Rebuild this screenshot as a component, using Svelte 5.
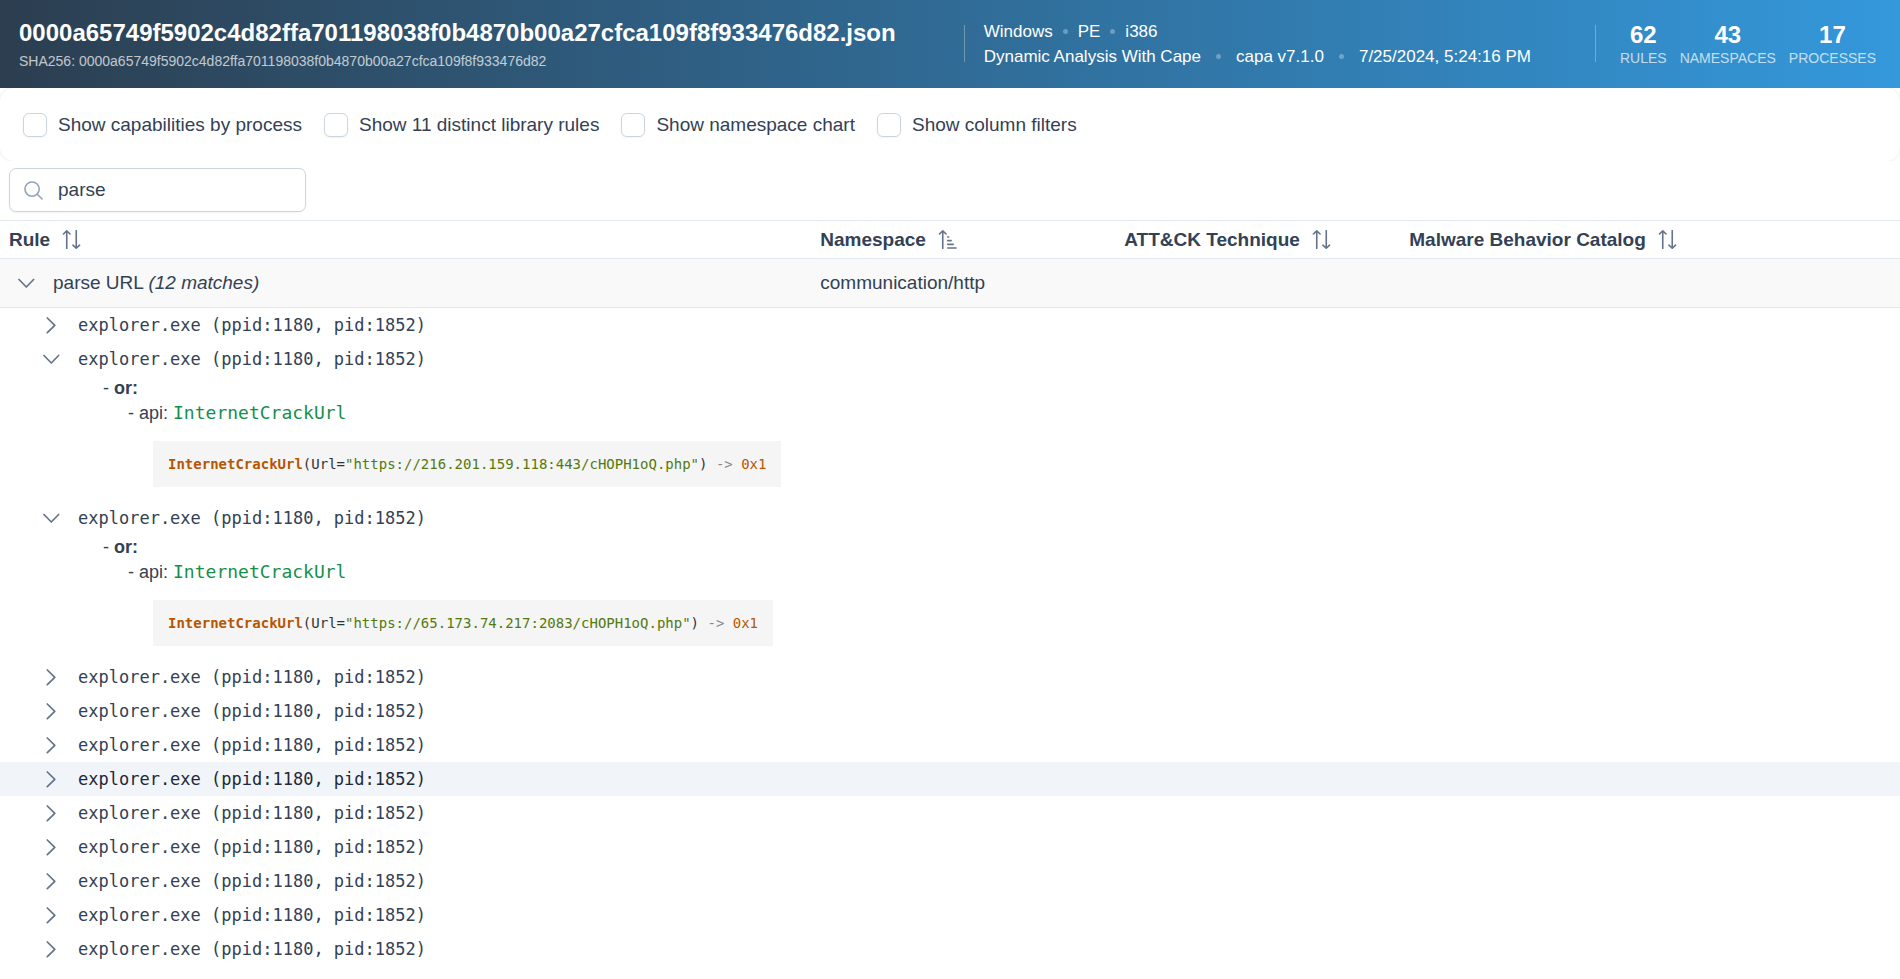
<script lang="ts">
	type Call = { api: string; url: string; ret: string };
	type Match = { process: string; open: boolean; active?: boolean; call: Call };

	const sha256 = '0000a65749f5902c4d82ffa701198038f0b4870b00a27cfca109f8f933476d82';

	const platform = ['Windows', 'PE', 'i386'];
	const analysis = ['Dynamic Analysis With Cape', 'capa v7.1.0', '7/25/2024, 5:24:16 PM'];

	const stats = [
		{ value: 62, label: 'RULES' },
		{ value: 43, label: 'NAMESPACES' },
		{ value: 17, label: 'PROCESSES' }
	];

	let options = $state([
		{ id: 'by-process', label: 'Show capabilities by process', checked: false },
		{ id: 'library-rules', label: 'Show 11 distinct library rules', checked: false },
		{ id: 'namespace-chart', label: 'Show namespace chart', checked: false },
		{ id: 'column-filters', label: 'Show column filters', checked: false }
	]);

	const columns = [
		{ name: 'Rule', sorted: false },
		{ name: 'Namespace', sorted: true },
		{ name: 'ATT&CK Technique', sorted: false },
		{ name: 'Malware Behavior Catalog', sorted: false }
	];

	function makeMatch(url: string, open = false, active = false): Match {
		return {
			process: 'explorer.exe (ppid:1180, pid:1852)',
			open,
			active,
			call: { api: 'InternetCrackUrl', url, ret: '0x1' }
		};
	}

	const urlA = 'https://216.201.159.118:443/cHOPH1oQ.php';
	const urlB = 'https://65.173.74.217:2083/cHOPH1oQ.php';

	let search = $state('parse');
	let ruleOpen = $state(true);
	let matches = $state<Match[]>([
		makeMatch(urlA),
		makeMatch(urlA, true),
		makeMatch(urlB, true),
		makeMatch(urlA),
		makeMatch(urlB),
		makeMatch(urlA),
		makeMatch(urlB, false, true),
		makeMatch(urlA),
		makeMatch(urlB),
		makeMatch(urlA),
		makeMatch(urlB),
		makeMatch(urlA)
	]);
</script>

{#snippet chevron(open: boolean)}
	<svg class="chevron" viewBox="0 0 17 17" aria-hidden="true">
		<path d={open ? 'M1 4.5l7.3 7.5L15.6 4.5' : 'M4.3 1l7.5 7.3L4.3 15.6'} />
	</svg>
{/snippet}

<header class="banner">
	<div class="file">
		<h1>{sha256}.json</h1>
		<p>SHA256: {sha256}</p>
	</div>
	<div class="group">
		<span class="rule-line"></span>
		<div class="meta">
			<div class="meta-row">
				{#each platform as item, i}
					{#if i > 0}<span class="dot"></span>{/if}
					<span>{item}</span>
				{/each}
			</div>
			<div class="meta-row wide">
				{#each analysis as item, i}
					{#if i > 0}<span class="dot"></span>{/if}
					<span>{item}</span>
				{/each}
			</div>
		</div>
	</div>
	<div class="group">
		<span class="rule-line"></span>
		<div class="stats">
			{#each stats as stat}
				<div class="stat">
					<strong>{stat.value}</strong>
					<span>{stat.label}</span>
				</div>
			{/each}
		</div>
	</div>
</header>

<main>
	<div class="options-wrap">
		<div class="options">
			{#each options as option (option.id)}
				<label for={option.id}>
					<input id={option.id} type="checkbox" bind:checked={option.checked} />
					<span>{option.label}</span>
				</label>
			{/each}
		</div>
	</div>

	<div class="toolbar">
		<div class="search">
			<svg viewBox="0 0 20 20" aria-hidden="true">
				<circle cx="8.5" cy="8.5" r="7.5" />
				<path d="M14 14l5 5" />
			</svg>
			<input type="text" aria-label="Search" bind:value={search} />
		</div>
	</div>

	<table>
		<colgroup>
			<col class="col-rule" />
			<col class="col-namespace" />
			<col class="col-attack" />
			<col />
		</colgroup>
		<thead>
			<tr>
				{#each columns as column}
					<th aria-sort={column.sorted ? 'ascending' : 'none'}>
						<button class="sort">
							<span>{column.name}</span>
							<svg viewBox="0 0 20 20" aria-hidden="true">
								<path d="M5 19.5V1M1.5 4.2L5 1l3.5 3.2" />
								{#if column.sorted}
									<path d="M10.2 7.3h1M10.2 11.2h3.6M10.2 15.1h5.8M10.2 19h8.8" />
								{:else}
									<path d="M15 .7v18.5M11.5 16l3.5 3.2 3.5-3.2" />
								{/if}
							</svg>
						</button>
					</th>
				{/each}
			</tr>
		</thead>
		<tbody>
			<tr class="rule">
				<td>
					<div class="node">
						<button class="toggle" aria-label="Toggle rule" onclick={() => (ruleOpen = !ruleOpen)}>
							{@render chevron(ruleOpen)}
						</button>
						<span>parse URL <em>(12 matches)</em></span>
					</div>
				</td>
				<td>communication/http</td>
				<td></td>
				<td></td>
			</tr>
			{#if ruleOpen}
				{#each matches as match}
					<tr class="match" class:active={match.active}>
						<td colspan="4">
							<div class="node">
								<button class="toggle" aria-label="Toggle match" onclick={() => (match.open = !match.open)}>
									{@render chevron(match.open)}
								</button>
								<span class="process">{match.process}</span>
							</div>
						</td>
					</tr>
					{#if match.open}
						<tr class="detail">
							<td colspan="4">
								<div class="statement">- <b>or:</b></div>
								<div class="statement feature">- api: <code>{match.call.api}</code></div>
								<pre><b>{match.call.api}</b>(Url=<i>"{match.call.url}"</i>) <s>-&gt;</s> <u>{match.call.ret}</u></pre>
							</td>
						</tr>
					{/if}
				{/each}
			{/if}
		</tbody>
	</table>
</main>

<style>
	:global(body) {
		background: #fff;
		color: #334155;
		font-family: 'Liberation Sans', Arial, sans-serif;
		font-size: 19px;
	}

	button {
		border: none;
		background: none;
		padding: 0;
		font: inherit;
		color: inherit;
		cursor: pointer;
	}

	svg {
		fill: none;
		stroke: #64748b;
		stroke-width: 1.7;
		stroke-linecap: round;
		stroke-linejoin: round;
	}

	.banner {
		display: flex;
		justify-content: space-between;
		box-sizing: border-box;
		min-height: 88px;
		padding: 19px 24px 12px 19px;
		background: linear-gradient(90deg, #2c3e50, #3498db);
		color: #fff;
		white-space: nowrap;
	}

	.file {
		padding-right: 4px;
	}

	h1 {
		margin: 0;
		font-size: 24px;
		line-height: 28px;
	}

	.file p {
		margin: 5px 0 0;
		font-size: 14px;
		line-height: 18px;
		opacity: 0.7;
	}

	.group {
		display: flex;
	}

	.rule-line {
		width: 1px;
		height: 37px;
		margin-top: 6px;
		background: rgba(255, 255, 255, 0.3);
	}

	.meta {
		margin-left: 19px;
		font-size: 17px;
		line-height: 25px;
	}

	.meta-row {
		display: flex;
		align-items: center;
		gap: 10px;
	}

	.meta-row.wide {
		gap: 15px;
	}

	.dot {
		width: 5px;
		height: 5px;
		border-radius: 50%;
		background: rgba(255, 255, 255, 0.3);
	}

	.stats {
		display: flex;
		gap: 13px;
		margin-left: 24px;
	}

	.stat {
		display: flex;
		flex-direction: column;
		align-items: center;
	}

	.stat strong {
		font-size: 24px;
		line-height: 32px;
	}

	.stat span {
		font-size: 14px;
		line-height: 14px;
		opacity: 0.7;
	}

	.options-wrap {
		overflow: hidden;
	}

	.options {
		display: flex;
		flex-wrap: wrap;
		gap: 22px;
		padding: 24px 23px;
		border-radius: 14px;
		background: #fff;
		box-shadow: 0 0 3px rgba(0, 0, 0, 0.12);
	}

	.options label {
		display: flex;
		align-items: center;
		gap: 11px;
		line-height: 25px;
		cursor: pointer;
	}

	.options input {
		appearance: none;
		box-sizing: border-box;
		width: 24px;
		height: 24px;
		margin: 0;
		border: 1px solid #cbd5e1;
		border-radius: 6px;
		background: #fff;
		box-shadow: 0 1px 2px rgba(18, 18, 23, 0.05);
	}

	.options input:checked {
		background: #3498db;
	}

	.toolbar {
		padding: 7px 9px 8px;
	}

	.search {
		display: flex;
		align-items: center;
		gap: 15px;
		box-sizing: border-box;
		width: 297px;
		height: 44px;
		padding: 0 14px;
		border: 1px solid #cbd5e1;
		border-radius: 7px;
		box-shadow: 0 1px 2px rgba(18, 18, 23, 0.05);
	}

	.search svg {
		flex-shrink: 0;
		width: 19px;
		height: 19px;
		stroke: #94a3b8;
	}

	.search input {
		min-width: 0;
		width: 100%;
		padding: 0;
		border: none;
		outline: none;
		background: none;
		font: inherit;
		color: #334155;
	}

	table {
		width: 100%;
		table-layout: fixed;
		border-collapse: separate;
		border-spacing: 0;
	}

	.col-rule {
		width: 42.7%;
	}

	.col-namespace {
		width: 16%;
	}

	.col-attack {
		width: 15%;
	}

	th {
		height: 37px;
		padding: 0 9px;
		border-top: 1px solid #e2e8f0;
		border-bottom: 1px solid #e2e8f0;
		text-align: left;
	}

	.sort {
		display: flex;
		align-items: center;
		gap: 12px;
		font-weight: bold;
		white-space: nowrap;
	}

	.sort svg {
		width: 19px;
		height: 19px;
	}

	td {
		padding: 0 9px;
	}

	.rule td {
		height: 48px;
		border-bottom: 1px solid #e2e8f0;
		background: #f9f9f9;
	}

	.node {
		display: flex;
		align-items: center;
		gap: 10px;
	}

	.toggle {
		display: flex;
		align-items: center;
		justify-content: center;
		width: 34px;
		height: 34px;
	}

	.chevron {
		width: 17px;
		height: 17px;
	}

	.match td {
		padding-left: 34px;
	}

	.match.active td {
		background: #f1f5f9;
		color: #1e293b;
	}

	.process,
	code,
	pre {
		font-family: 'DejaVu Sans Mono', Menlo, monospace;
	}

	.process {
		font-size: 17px;
		line-height: 25px;
	}

	.detail td {
		padding: 0 9px 14px 103px;
	}

	.statement {
		height: 25px;
		font-size: 18px;
		line-height: 25px;
	}

	.feature {
		padding-left: 25px;
	}

	code {
		color: #15904a;
		font-size: 18px;
		line-height: 20px;
	}

	pre {
		width: fit-content;
		margin: 15px 0 0 50px;
		padding: 14px 15px;
		background: #f5f5f5;
		color: #2f3337;
		font-size: 14px;
		line-height: 18px;
	}

	pre b,
	pre u {
		color: #b75501;
		text-decoration: none;
	}

	pre i {
		color: #54790d;
		font-style: normal;
	}

	pre s {
		color: #888;
		text-decoration: none;
	}
</style>
